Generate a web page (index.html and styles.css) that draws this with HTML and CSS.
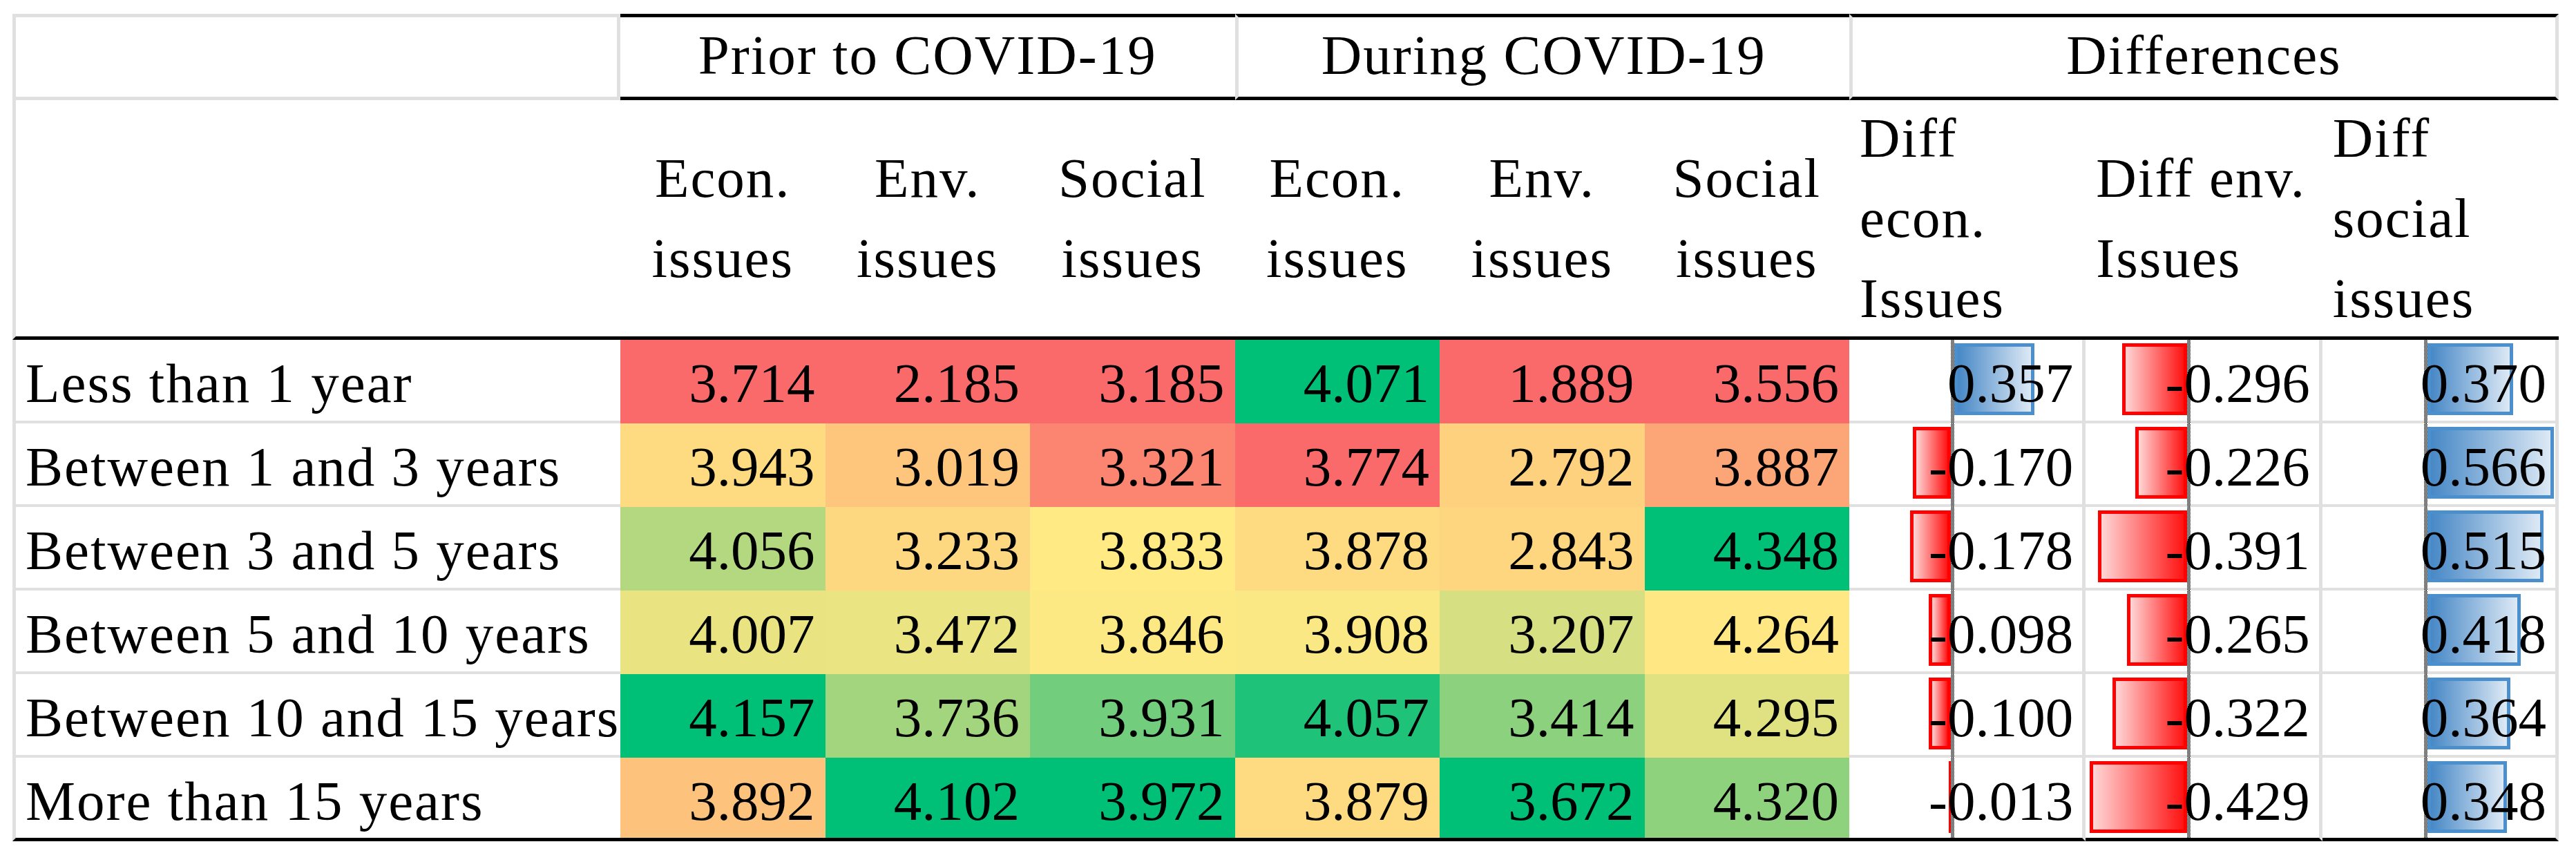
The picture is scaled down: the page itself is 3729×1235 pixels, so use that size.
FILE: index.html
```html
<!DOCTYPE html>
<html lang="en">
<head>
<meta charset="utf-8">
<title>COVID-19 issues table</title>
<link rel="stylesheet" href="styles.css">
</head>
<body>
<div class="tbl">
  <div class="c h1 corner"></div>
  <div class="c h1 grp">Prior to COVID-19</div>
  <div class="c h1 grp sep">During COVID-19</div>
  <div class="c h1 grp sep last">Differences</div>

  <div class="c h2 blank"></div>
  <div class="c h2 ctr"><div>Econ.<br>issues</div></div>
  <div class="c h2 ctr"><div>Env.<br>issues</div></div>
  <div class="c h2 ctr"><div>Social<br>issues</div></div>
  <div class="c h2 ctr"><div>Econ.<br>issues</div></div>
  <div class="c h2 ctr"><div>Env.<br>issues</div></div>
  <div class="c h2 ctr"><div>Social<br>issues</div></div>
  <div class="c h2 dl"><div>Diff<br>econ.<br>Issues</div></div>
  <div class="c h2 dl"><div>Diff env.<br>Issues</div></div>
  <div class="c h2 dl"><div>Diff<br>social<br>issues</div></div>

  <!-- Row 1 -->
  <div class="c lab">Less than 1 year</div>
  <div class="c num" style="background:#FA6A6B">3.714</div>
  <div class="c num" style="background:#FA6A6B">2.185</div>
  <div class="c num" style="background:#FA6A6B">3.185</div>
  <div class="c num" style="background:#00C078">4.071</div>
  <div class="c num" style="background:#FA6A6B">1.889</div>
  <div class="c num" style="background:#FA6A6B">3.556</div>
  <div class="c diff"><i class="axis"></i><i class="bar pos" style="width:116px"></i><span>0.357</span></div>
  <div class="c diff"><i class="axis"></i><i class="bar neg" style="width:94px"></i><span>-0.296</span></div>
  <div class="c diff"><i class="axis"></i><i class="bar pos" style="width:124px"></i><span>0.370</span></div>

  <!-- Row 2 -->
  <div class="c lab">Between 1 and 3 years</div>
  <div class="c num" style="background:#FEDB81">3.943</div>
  <div class="c num" style="background:#FEC67D">3.019</div>
  <div class="c num" style="background:#FB8570">3.321</div>
  <div class="c num" style="background:#FA6A6B">3.774</div>
  <div class="c num" style="background:#FED17F">2.792</div>
  <div class="c num" style="background:#FCA576">3.887</div>
  <div class="c diff"><i class="axis"></i><i class="bar neg" style="width:55px"></i><span>-0.170</span></div>
  <div class="c diff"><i class="axis"></i><i class="bar neg" style="width:75px"></i><span>-0.226</span></div>
  <div class="c diff"><i class="axis"></i><i class="bar pos" style="width:183px"></i><span>0.566</span></div>

  <!-- Row 3 -->
  <div class="c lab">Between 3 and 5 years</div>
  <div class="c num" style="background:#B3D87F">4.056</div>
  <div class="c num" style="background:#FED880">3.233</div>
  <div class="c num" style="background:#FFEA84">3.833</div>
  <div class="c num" style="background:#FEDA81">3.878</div>
  <div class="c num" style="background:#FED680">2.843</div>
  <div class="c num" style="background:#00C078">4.348</div>
  <div class="c diff"><i class="axis"></i><i class="bar neg" style="width:59px"></i><span>-0.178</span></div>
  <div class="c diff"><i class="axis"></i><i class="bar neg" style="width:129px"></i><span>-0.391</span></div>
  <div class="c diff"><i class="axis"></i><i class="bar pos" style="width:168px"></i><span>0.515</span></div>

  <!-- Row 4 -->
  <div class="c lab">Between 5 and 10 years</div>
  <div class="c num" style="background:#E9E382">4.007</div>
  <div class="c num" style="background:#EAE482">3.472</div>
  <div class="c num" style="background:#FCE983">3.846</div>
  <div class="c num" style="background:#F9E883">3.908</div>
  <div class="c num" style="background:#D6DF81">3.207</div>
  <div class="c num" style="background:#FFE883">4.264</div>
  <div class="c diff"><i class="axis"></i><i class="bar neg" style="width:32px"></i><span>-0.098</span></div>
  <div class="c diff"><i class="axis"></i><i class="bar neg" style="width:87px"></i><span>-0.265</span></div>
  <div class="c diff"><i class="axis"></i><i class="bar pos" style="width:135px"></i><span>0.418</span></div>

  <!-- Row 5 -->
  <div class="c lab">Between 10 and 15 years</div>
  <div class="c num" style="background:#00C078">4.157</div>
  <div class="c num" style="background:#A2D57E">3.736</div>
  <div class="c num" style="background:#72CD7C">3.931</div>
  <div class="c num" style="background:#1EC379">4.057</div>
  <div class="c num" style="background:#8CD17D">3.414</div>
  <div class="c num" style="background:#E0E181">4.295</div>
  <div class="c diff"><i class="axis"></i><i class="bar neg" style="width:32px"></i><span>-0.100</span></div>
  <div class="c diff"><i class="axis"></i><i class="bar neg" style="width:108px"></i><span>-0.322</span></div>
  <div class="c diff"><i class="axis"></i><i class="bar pos" style="width:120px"></i><span>0.364</span></div>

  <!-- Row 6 -->
  <div class="c lab end">More than 15 years</div>
  <div class="c num end" style="background:#FDC27C">3.892</div>
  <div class="c num end" style="background:#00C078">4.102</div>
  <div class="c num end" style="background:#00C078">3.972</div>
  <div class="c num end" style="background:#FEDB81">3.879</div>
  <div class="c num end" style="background:#00C078">3.672</div>
  <div class="c num end" style="background:#8FD27D">4.320</div>
  <div class="c diff end"><i class="axis"></i><i class="bar neg thin" style="width:3px"></i><span>-0.013</span></div>
  <div class="c diff end"><i class="axis"></i><i class="bar neg" style="width:141px"></i><span>-0.429</span></div>
  <div class="c diff end"><i class="axis"></i><i class="bar pos" style="width:115px"></i><span>0.348</span></div>
</div>
</body>
</html>
```

FILE: styles.css
```css
html, body {
  margin: 0;
  padding: 0;
  background: #ffffff;
}

.tbl {
  display: grid;
  grid-template-columns: 880px repeat(6, 296.5px) repeat(3, 342.33px);
  grid-template-rows: 125px 347px repeat(6, 121px);
  margin: 20px 0 0 18px;
  width: max-content;
  font-family: "Liberation Serif", "Times New Roman", serif;
  font-size: 81px;
  color: #000;
}

.c {
  box-sizing: border-box;
  min-width: 0;
}

/* header row 1 */
.h1 {
  border-top: 5px solid #000;
  border-bottom: 5px solid #000;
  line-height: 111px;
  text-align: center;
  letter-spacing: 2px;
  white-space: nowrap;
}

.corner {
  border: 5px solid #e0e0e0;
}

.grp {
  grid-column: span 3;
}

.sep {
  border-left: 5px solid #e0e0e0;
}

.last {
  border-right: 5px solid #e0e0e0;
}

/* header row 2 */
.h2 {
  border-bottom: 5px solid #000;
  display: flex;
  align-items: center;
  line-height: 116px;
  letter-spacing: 2px;
  white-space: nowrap;
}

.h2.blank {
  border-left: 5px solid #e0e0e0;
}

.h2.ctr {
  justify-content: center;
  text-align: center;
}

.h2.dl {
  justify-content: flex-start;
  text-align: left;
  padding-left: 15px;
}

/* data rows */
.lab {
  border-left: 5px solid #e0e0e0;
  border-bottom: 4px solid #e0e0e0;
  padding: 13px 0 0 14px;
  line-height: 100px;
  letter-spacing: 2px;
  white-space: nowrap;
}

.num {
  text-align: right;
  padding: 13px 15px 0 0;
  line-height: 100px;
}

.diff {
  position: relative;
  border-right: 5px solid #e0e0e0;
  border-bottom: 4px solid #e0e0e0;
  text-align: right;
  padding: 13px 13px 0 0;
  line-height: 100px;
}

.diff span {
  position: relative;
  z-index: 1;
}

.end.lab,
.end.diff,
.end.num {
  border-bottom: 5px solid #000;
}

.axis {
  position: absolute;
  left: 147px;
  top: 0;
  bottom: -4px;
  width: 5px;
  background: repeating-conic-gradient(#000 0% 25%, #fff 0% 50%) 0 0 / 2px 2px;
}

.end .axis {
  bottom: 0;
}

.bar {
  position: absolute;
  top: 5px;
  height: 104px;
  box-sizing: border-box;
  border: 5px solid;
}

.neg {
  right: calc(100% - 147px);
  border-color: #ff0000;
  background: linear-gradient(to right, #ffd6d6, #ff1414);
}

.pos {
  left: 152px;
  border-color: #4b8fcd;
  background: linear-gradient(to right, #4788c6, #dde9f5);
}

.thin {
  border: 0;
  background: #ff0000;
}
```
